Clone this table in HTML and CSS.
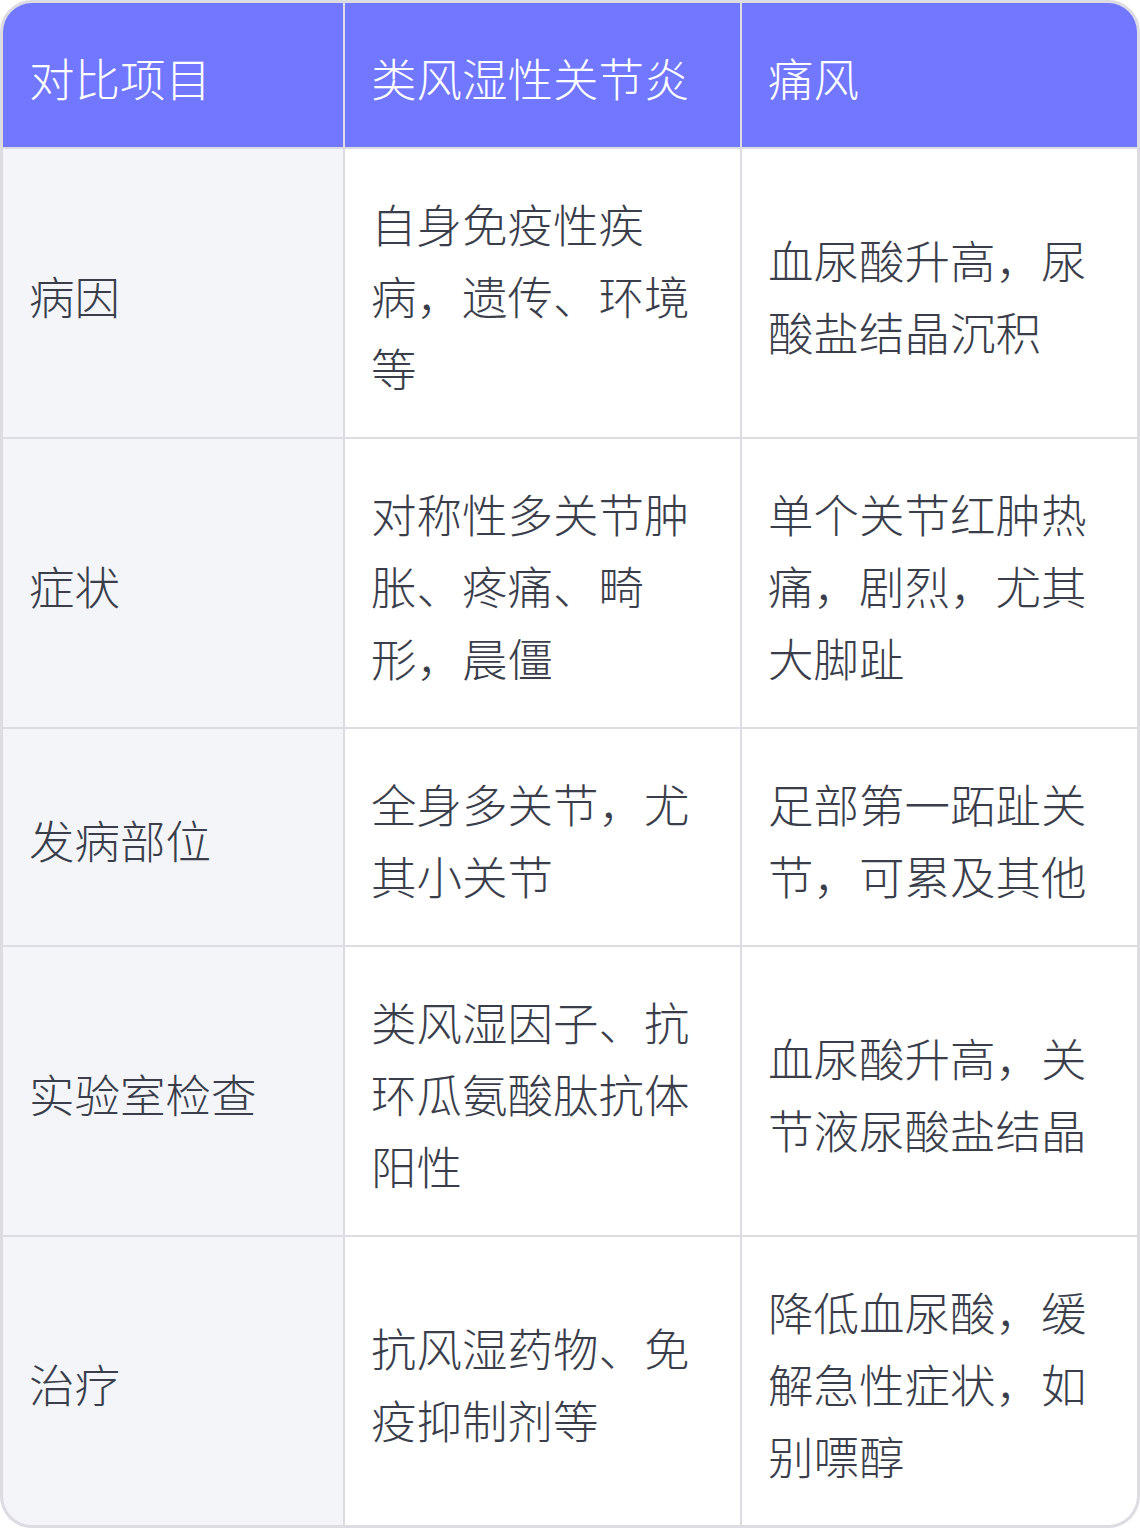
FILE: index.html
```html
<!DOCTYPE html>
<html lang="zh-CN">
<head>
<meta charset="utf-8">
<title>类风湿性关节炎与痛风对比</title>
<link rel="stylesheet" href="styles.css">
</head>
<body>
<div class="table">
  <div class="cell head">对比项目</div>
  <div class="cell head">类风湿性关节炎</div>
  <div class="cell head">痛风</div>

  <div class="cell label">病因</div>
  <div class="cell">自身免疫性疾病，遗传、环境等</div>
  <div class="cell">血尿酸升高，尿酸盐结晶沉积</div>

  <div class="cell label">症状</div>
  <div class="cell">对称性多关节肿胀、疼痛、畸形，晨僵</div>
  <div class="cell">单个关节红肿热痛，剧烈，尤其大脚趾</div>

  <div class="cell label">发病部位</div>
  <div class="cell">全身多关节，尤其小关节</div>
  <div class="cell">足部第一跖趾关节，可累及其他</div>

  <div class="cell label">实验室检查</div>
  <div class="cell">类风湿因子、抗环瓜氨酸肽抗体阳性</div>
  <div class="cell">血尿酸升高，关节液尿酸盐结晶</div>

  <div class="cell label">治疗</div>
  <div class="cell">抗风湿药物、免疫抑制剂等</div>
  <div class="cell">降低血尿酸，缓解急性症状，如别嘌醇</div>
</div>
</body>
</html>
```
FILE: styles.css
```css
html, body {
  margin: 0;
  padding: 0;
  background: #ffffff;
}
.table {
  width: 1140px;
  height: 1528px;
  box-sizing: border-box;
  border: 3px solid #dcdce2;
  border-radius: 32px;
  overflow: hidden;
  display: grid;
  grid-template-columns: 340px 395px 1fr;
  grid-auto-rows: auto;
  gap: 2px;
  background: #dcdce2;
  font-family: "Noto Sans CJK SC", "Noto Sans", sans-serif;
  font-weight: 300;
  font-size: 45.5px;
  line-height: 72px;
  color: #3a3e4b;
}
.cell {
  background: #ffffff;
  padding: 38px 26px 34px;
  display: flex;
  align-items: center;
}
.head {
  background: #7177ff;
  color: #ffffff;
}
.label {
  background: #f4f5f9;
}
```
